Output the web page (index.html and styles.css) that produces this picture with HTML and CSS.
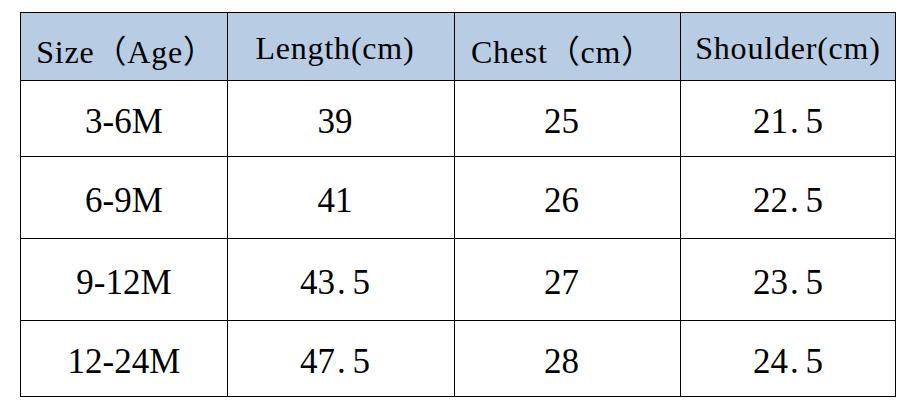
FILE: index.html
```html
<!DOCTYPE html>
<html lang="en">
<head>
<meta charset="utf-8">
<title>Size chart</title>
<link rel="stylesheet" href="styles.css">
</head>
<body>
<div class="chart">
  <div class="cell head c1">Size（Age）</div>
  <div class="cell head c2">Length(cm)</div>
  <div class="cell head c3">Chest（cm）</div>
  <div class="cell head c4">Shoulder(cm)</div>

  <div class="cell c1">3-6M</div>
  <div class="cell c2">39</div>
  <div class="cell c3">25</div>
  <div class="cell c4">21<span class="dot">.</span>5</div>

  <div class="cell c1">6-9M</div>
  <div class="cell c2">41</div>
  <div class="cell c3">26</div>
  <div class="cell c4">22<span class="dot">.</span>5</div>

  <div class="cell c1">9-12M</div>
  <div class="cell c2">43<span class="dot">.</span>5</div>
  <div class="cell c3">27</div>
  <div class="cell c4">23<span class="dot">.</span>5</div>

  <div class="cell c1">12-24M</div>
  <div class="cell c2">47<span class="dot">.</span>5</div>
  <div class="cell c3">28</div>
  <div class="cell c4">24<span class="dot">.</span>5</div>
</div>
</body>
</html>
```

FILE: styles.css
```css
html, body {
  margin: 0;
  padding: 0;
  background: #ffffff;
}

body {
  padding: 12px 0 0 20px;
}

.chart {
  display: grid;
  grid-template-columns: 207px 227px 226px 215px;
  grid-template-rows: 68px 76px 82px 82px 76px;
  border-top: 1px solid #000;
  border-left: 1px solid #000;
  width: max-content;
  font-family: "Liberation Serif", "Noto Sans CJK SC", serif;
  color: #000;
}

.cell {
  display: flex;
  align-items: center;
  justify-content: center;
  border-right: 1px solid #000;
  border-bottom: 1px solid #000;
  font-size: 35px;
  padding-top: 6px;
  box-sizing: border-box;
  white-space: nowrap;
}

.head {
  background: #b8cce4;
  font-size: 32px;
  letter-spacing: 0.8px;
  padding-top: 4px;
}

.c2, .c3 {
  padding-right: 12px;
}

.head.c1 {
  padding-left: 4px;
  padding-right: 0;
}

.head.c3 {
  padding-right: 10px;
}

.dot {
  display: inline-block;
  width: 0.5em;
  text-align: left;
  padding-left: 2px;
  box-sizing: border-box;
}
```
